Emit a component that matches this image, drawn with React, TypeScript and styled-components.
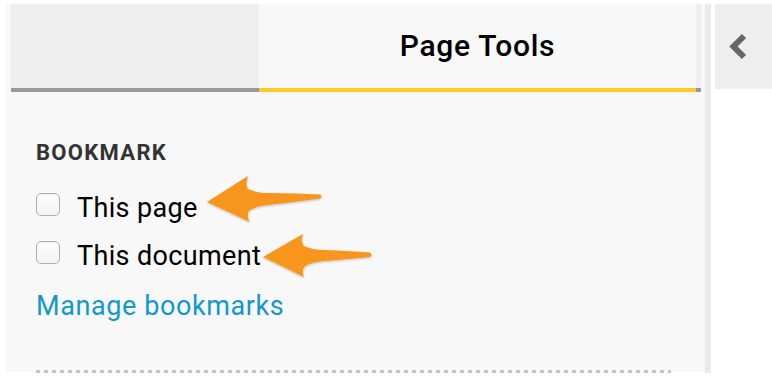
import {FC} from "react";
import styled, {createGlobalStyle} from "styled-components";

const GlobalStyle = createGlobalStyle`
  html, body {
    margin: 0;
    padding: 0;
    background: #ffffff;
  }
  body {
    font-family: Roboto, "Liberation Sans", sans-serif;
    overflow: hidden;
  }
`

const Page = styled.div`
  display: flex;
  align-items: flex-start;
  padding: 4px 0 0 6px;
  width: 772px;
  height: 382px;
  box-sizing: border-box;
  position: relative;
`

const Panel = styled.aside`
  display: flex;
  width: 705px;
  height: 369px;
  background: #f8f8f8;
  overflow: hidden;
  flex-shrink: 0;
`

const PanelMain = styled.div`
  flex: 1;
  display: flex;
  flex-direction: column;
  min-width: 0;
`

const Scrollbar = styled.div`
  width: 6px;
  margin-left: 4px;
  background: #ebebeb;
`

const TabBar = styled.div`
  display: flex;
  margin-left: 5px;
`

const Tab = styled.div<{ $active?: boolean; $width: number }>`
  width: ${p => p.$width}px;
  height: 84px;
  line-height: 84px;
  text-align: center;
  background: ${p => (p.$active ? "#f8f8f8" : "#eeeeee")};
  border-bottom: 4px solid ${p => (p.$active ? "#ffc926" : "#999999")};
  font-size: 30px;
  font-weight: 500;
  letter-spacing: 0.7px;
  color: #000000;
  flex-shrink: 0;
`

const Content = styled.div`
  padding: 48px 30px 0 30px;
`

const SectionTitle = styled.h3`
  margin: 0 0 18px 0;
  font-size: 22px;
  line-height: 26px;
  font-weight: 700;
  letter-spacing: 1.3px;
  color: #333333;
`

const OptionRow = styled.label`
  display: flex;
  align-items: flex-start;
  height: 48px;
  font-size: 27px;
  line-height: 48px;
  letter-spacing: 0.35px;
  color: #000000;
`

const Checkbox = styled.input`
  appearance: none;
  margin: 9px 17px 0 0;
  width: 24px;
  height: 23px;
  border: 1px solid #b0b0b0;
  border-radius: 5px;
  background: linear-gradient(#ffffff, #f2f2f2);
  box-shadow: inset 0 1px 1px rgba(0, 0, 0, 0.06);
  box-sizing: border-box;
  flex-shrink: 0;
`

const ManageLink = styled.a`
  display: block;
  margin-top: 10px;
  font-size: 27px;
  line-height: 32px;
  letter-spacing: 0.6px;
  color: #1198d0;
  text-decoration: none;
`

const Divider = styled.div`
  margin-top: 48px;
  height: 4px;
  background: repeating-linear-gradient(90deg, #c4c4c4 0 4px, transparent 4px 8px);
`

const CollapseButton = styled.button`
  margin-left: 4px;
  width: 57px;
  height: 85px;
  border: none;
  padding: 0 0 0 14px;
  background: #eeeeee;
  display: flex;
  align-items: center;
  flex-shrink: 0;
`

const Annotations = styled.svg`
  position: absolute;
  left: 0;
  top: 0;
  pointer-events: none;
`

const Arrow: FC<{ d: string }> = ({d}) => (
    <path d={d} fill="#f8951d" filter="url(#arrowShadow)"/>
)

const App: FC = () => {
    return (
        <Page>
            <GlobalStyle/>
            <Panel>
                <PanelMain>
                    <TabBar>
                        <Tab $width={248}/>
                        <Tab $width={437} $active>Page Tools</Tab>
                        <Tab $width={5}/>
                    </TabBar>
                    <Content>
                        <SectionTitle>BOOKMARK</SectionTitle>
                        <OptionRow>
                            <Checkbox type="checkbox"/>
                            This page
                        </OptionRow>
                        <OptionRow>
                            <Checkbox type="checkbox"/>
                            This document
                        </OptionRow>
                        <ManageLink href="#">Manage bookmarks</ManageLink>
                        <Divider/>
                    </Content>
                </PanelMain>
                <Scrollbar/>
            </Panel>
            <CollapseButton aria-label="Collapse">
                <svg width="20" height="28" viewBox="0 0 20 28">
                    <polyline points="15,3 4.5,13.5 15,24" fill="none" stroke="#666666" strokeWidth="6"/>
                </svg>
            </CollapseButton>
            <Annotations width="772" height="382">
                <defs>
                    <filter id="arrowShadow" x="-10%" y="-20%" width="130%" height="150%">
                        <feDropShadow dx="0" dy="1" stdDeviation="1" floodColor="#000" floodOpacity="0.25"/>
                    </filter>
                </defs>
                <Arrow d="M207 202 L248 176 Q245 185 248 189 Q256 193 268 193 Q295 193 320 194.5 Q323 196.5 320 198.5 Q295 202 268 205 Q255 206 249 211 Q246 216 250 222 Z"/>
                <Arrow d="M263 257 L303 234 Q300 242 304 246 Q312 250 325 250 Q350 251 370 252.5 Q373 255 370 257 Q350 259 325 261 Q312 262 305 266 Q301 271 304 277 Z"/>
            </Annotations>
        </Page>
    )
};

export default App
